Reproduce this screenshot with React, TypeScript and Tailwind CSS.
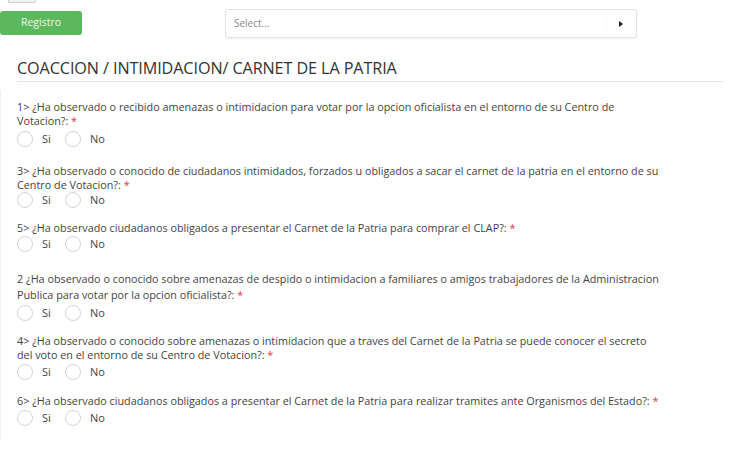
import React from "react";

type Q = { text: string; mt: string; lh: string; rmt: string };

const questions: Q[] = [
  {
    text: "1> ¿Ha observado o recibido amenazas o intimidacion para votar por la opcion oficialista en el entorno de su Centro de Votacion?:",
    mt: "mt-[18px]",
    lh: "leading-[14px]",
    rmt: "mt-[2px]",
  },
  {
    text: "3> ¿Ha observado o conocido de ciudadanos intimidados, forzados u obligados a sacar el carnet de la patria en el entorno de su Centro de Votacion?:",
    mt: "mt-[16px]",
    lh: "leading-[14px]",
    rmt: "mt-[-1px]",
  },
  {
    text: "5> ¿Ha observado ciudadanos obligados a presentar el Carnet de la Patria para comprar el CLAP?:",
    mt: "mt-[12px]",
    lh: "leading-[14px]",
    rmt: "mt-[0px]",
  },
  {
    text: "2 ¿Ha observado o conocido sobre amenazas de despido o intimidacion a familiares o amigos trabajadores de la Administracion Publica para votar por la opcion oficialista?:",
    mt: "mt-[18px]",
    lh: "leading-[16px]",
    rmt: "mt-[1px]",
  },
  {
    text: "4> ¿Ha observado o conocido sobre amenazas o intimidacion que a traves del Carnet de la Patria se puede conocer el secreto del voto en el entorno de su Centro de Votacion?:",
    mt: "mt-[12px]",
    lh: "leading-[14px]",
    rmt: "mt-[1px]",
  },
  {
    text: "6> ¿Ha observado ciudadanos obligados a presentar el Carnet de la Patria para realizar tramites ante Organismos del Estado?:",
    mt: "mt-[13px]",
    lh: "leading-[14px]",
    rmt: "mt-[1px]",
  },
];

function Radio({ label }: { label: string }) {
  return (
    <div className="flex items-center w-[48px]">
      <span className="w-[16px] h-[16px] rounded-full border border-[#d4d4d4] bg-white shrink-0" />
      <span className="ml-[9px] text-[11px] text-[#444]">{label}</span>
    </div>
  );
}

export default function App() {
  return (
    <div
      className="w-[752px] h-[461px] bg-white overflow-hidden text-[#333]"
      style={{ fontFamily: '"Open Sans", "Noto Sans", sans-serif' }}
    >
      <div className="ml-[8px] w-[28px] h-[3px] border-x border-b border-[#cfcfcf] bg-[#f3f3f3] rounded-b-[2px]" />
      <div className="flex items-start mt-[6px]">
        <button className="mt-[2px] w-[82px] h-[24px] rounded-[3px] bg-[#5cb85c] text-[#eef8ee] text-[10.5px] flex items-center justify-center">
          Registro
        </button>
        <div className="ml-[143px] w-[412px] h-[29px] rounded-[3px] border border-[#e2e2e2] shadow-[0_1px_2px_rgba(0,0,0,0.06)] flex items-center">
          <span className="ml-[8px] text-[10px] text-[#8a8a8a] flex-1">Select...</span>
          <span className="w-px h-[20px] bg-[#fafafa] mr-[12px]" />
          <svg width="4" height="6" viewBox="0 0 4 6" className="mr-[13px]">
            <path d="M0 0 L4 3 L0 6 Z" fill="#222" />
          </svg>
        </div>
      </div>
      <div className="mt-[18px] ml-[17px] w-[707px] border-b border-[#e6e6e6] h-[26px] flex items-center">
        <span className="text-[16.2px] text-[#333] tracking-[-0.1px]">
          COACCION / INTIMIDACION/ CARNET DE LA PATRIA
        </span>
      </div>
      <div className="flex">
        <div className="w-[2px] border-l border-[#f0f0f0] mt-[8px] h-[350px]" />
        <div className="ml-[15px] w-[643px] flex flex-col">
          {questions.map((q, i) => (
            <div key={i} className={q.mt}>
              <p className={`text-[10.8px] ${q.lh} text-[#444]`}>
                {q.text} <span className="text-[#e0393e]">*</span>
              </p>
              <div className={`flex items-center h-[18px] ${q.rmt}`}>
                <Radio label="Si" />
                <Radio label="No" />
              </div>
            </div>
          ))}
        </div>
      </div>
    </div>
  );
}
